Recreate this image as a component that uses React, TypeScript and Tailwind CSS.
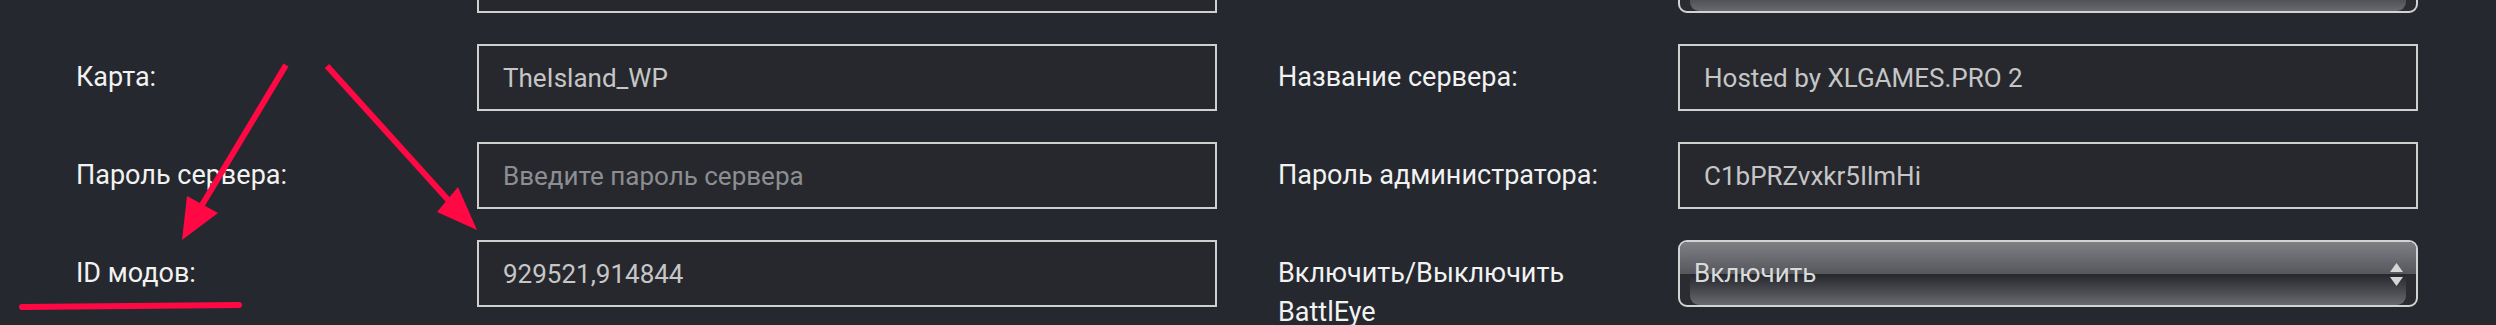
import type { InputHTMLAttributes } from "react";

/* ================= DATA ================= */

type Field =
  | { kind: "input"; label: string; value?: string; placeholder?: string }
  | { kind: "select"; label: string; value: string };

const rows: [Field, Field][] = [
  [
    { kind: "input", label: "", value: "" },
    { kind: "select", label: "", value: "" },
  ],
  [
    { kind: "input", label: "Карта:", value: "TheIsland_WP" },
    { kind: "input", label: "Название сервера:", value: "Hosted by XLGAMES.PRO 2" },
  ],
  [
    { kind: "input", label: "Пароль сервера:", placeholder: "Введите пароль сервера" },
    { kind: "input", label: "Пароль администратора:", value: "C1bPRZvxkr5IlmHi" },
  ],
  [
    { kind: "input", label: "ID модов:", value: "929521,914844" },
    { kind: "select", label: "Включить/Выключить BattlEye", value: "Включить" },
  ],
];

/* ================= MAIN ================= */

export default function App() {
  return (
    <div
      className="relative h-[325px] w-full overflow-hidden bg-[#25282e] text-[#f0f0f0]"
      style={{ fontFamily: "Roboto, 'Noto Sans', sans-serif" }}
    >
      <div className="-mt-[54px] grid grid-cols-[401px_740px_461px_740px] gap-y-[31px] pl-[76px]">
        {rows.map(([left, right], i) => (
          <Row key={i} left={left} right={right} />
        ))}
      </div>

      {/* red annotation */}
      <svg
        className="pointer-events-none absolute left-0 top-0"
        width="2496"
        height="325"
        viewBox="0 0 2496 325"
      >
        <line x1="286" y1="65" x2="199" y2="210" stroke="#ff0844" strokeWidth="6" />
        <polygon points="182,240 187,196 218,213" fill="#ff0844" />
        <line x1="327" y1="66" x2="450" y2="202" stroke="#ff0844" strokeWidth="6" />
        <polygon points="477,230 437,212 458,187" fill="#ff0844" />
        <line
          x1="22"
          y1="307"
          x2="239"
          y2="305"
          stroke="#ff0844"
          strokeWidth="6"
          strokeLinecap="round"
        />
      </svg>
    </div>
  );
}

/* ================= ROW ================= */

function Row({ left, right }: { left: Field; right: Field }) {
  return (
    <>
      <Label text={left.label} />
      <Control field={left} />
      <div className="pl-[61px]">
        <Label text={right.label} />
      </div>
      <Control field={right} />
    </>
  );
}

function Label({ text }: { text: string }) {
  return (
    <div className="w-[380px] pt-[14px] text-[27px] leading-[39px] text-[#f2f2f2]">
      {text}
    </div>
  );
}

function Control({ field }: { field: Field }) {
  if (field.kind === "select") return <FakeSelect value={field.value} />;
  return <TextInput defaultValue={field.value} placeholder={field.placeholder} />;
}

/* ================= CONTROLS ================= */

function TextInput(props: InputHTMLAttributes<HTMLInputElement>) {
  return (
    <input
      {...props}
      readOnly
      className="h-[67px] w-full border-2 border-[#cfcfcf] bg-[#26282e] px-[24px] text-[26px] text-[#c6c6c6] outline-none placeholder:text-[#8d8e91]"
    />
  );
}

function FakeSelect({ value }: { value: string }) {
  return (
    <div className="relative flex h-[67px] w-full flex-col overflow-hidden rounded-[9px] border-2 border-[#d3d3d3] bg-[#2a2c31]">
      <div className="h-1/2 bg-gradient-to-b from-[#7f8085] to-[#55575c]" />
      <div className="mx-[10px] h-1/2 rounded-b-[9px] bg-gradient-to-b from-[#25272c] to-[#686a6f]" />
      {value && (
        <div className="absolute inset-0 flex items-center justify-between pl-[14px] pr-[13px]">
          <span className="text-[26px] text-[#dadada]">{value}</span>
          <svg width="13" height="23" viewBox="0 0 13 23" className="mt-[1px]">
            <polygon points="6.5,0 13,9 0,9" fill="#d6d6d6" />
            <polygon points="0,14 13,14 6.5,23" fill="#d6d6d6" />
          </svg>
        </div>
      )}
    </div>
  );
}
